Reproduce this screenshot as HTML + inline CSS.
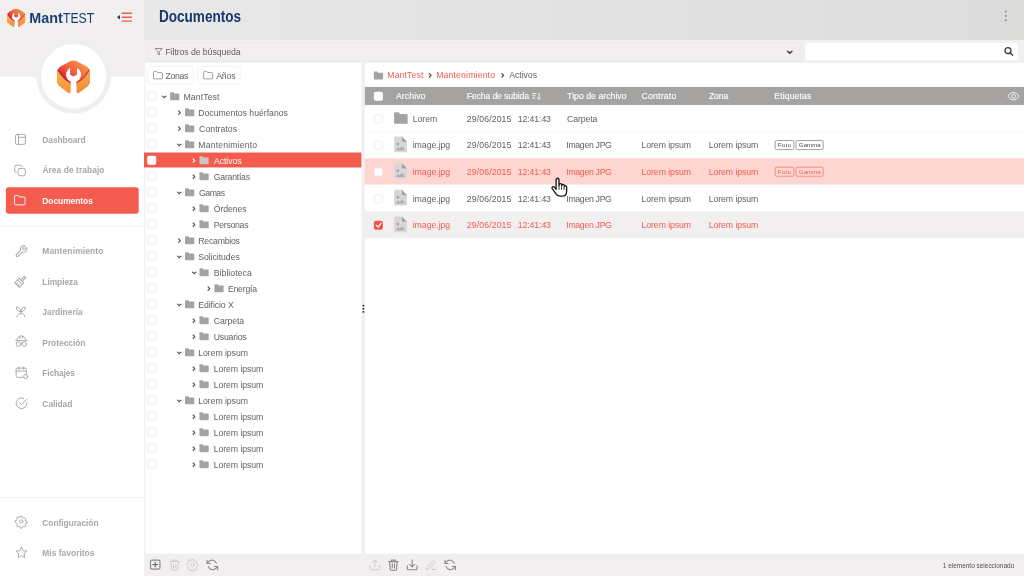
<!DOCTYPE html><html lang="es"><head><meta charset="utf-8"><title>MantTEST - Documentos</title><style>
*{box-sizing:border-box;margin:0;padding:0}
html,body{width:1024px;height:576px;overflow:hidden;background:#fff}
body{font-family:"Liberation Sans",sans-serif;font-size:16.312px;color:#63615f;position:relative}
#w{position:absolute;left:0;top:0;width:1920px;height:1080px;transform:scale(.5333333);transform-origin:0 0}
#o{position:absolute;left:0;top:0;width:1024px;height:576px;overflow:hidden;will-change:transform}
#z{position:absolute;left:0;top:0;width:1920px;height:1080px}
.a,.t,svg{position:absolute}
svg{display:block;overflow:visible}
.t{white-space:nowrap;line-height:1}
.cb{position:absolute;width:17.006px;height:17.006px;border:2.006px solid #f0eeee;border-radius:3.75px;background:#fff}
</style></head><body><div id="o"><div id="w"><div id="z">
<div class="a" style="left:0px;top:0px;width:270px;height:144px;background:#f1efef;"></div>
<div class="a" style="left:270px;top:0px;width:1650px;height:74.625px;background:linear-gradient(90deg,#e9e8e8 0%,#dddcdb 100%);"></div>
<div class="a" style="left:270px;top:74.625px;width:1650px;height:1005.375px;background:#f1efef;"></div>
<div class="a" style="left:270px;top:118.312px;width:3px;height:919.312px;background:#f5f3f3;"></div>
<div class="a" style="left:273px;top:118.312px;width:405px;height:919.312px;background:#fff;"></div>
<div class="a" style="left:684.375px;top:118.312px;width:1235.625px;height:919.312px;background:#fff;"></div>
<div class="a" style="left:67.875px;top:73.5px;width:139.875px;height:139.875px;border-radius:50%;background:#fff;border:9.938px solid #f0eeee"></div>
<svg style="left:12.75px;top:14.812px" width="34.69" height="36.38" viewBox="0 0 100 105" ><defs><linearGradient id="sa" gradientUnits="userSpaceOnUse" x1="75" y1="5" x2="22" y2="68"><stop offset="0" stop-color="#f89a48"/><stop offset="0.45" stop-color="#f2673c"/><stop offset="1" stop-color="#dc1a3a"/></linearGradient><linearGradient id="sb" gradientUnits="userSpaceOnUse" x1="30" y1="30" x2="50" y2="108"><stop offset="0" stop-color="#fbb648"/><stop offset="1" stop-color="#f5883c"/></linearGradient><clipPath id="sc"><path d="M36.9 7.3Q50.0 0.0 63.1 7.3L86.9 20.7Q100.0 28.0 100.0 43.0L100.0 62.0Q100.0 77.0 88.0 86.0L50.0 114.5L12.0 86.0Q0.0 77.0 0.0 62.0L0.0 43.0Q0.0 28.0 13.1 20.7Z"/></clipPath></defs>
<g clip-path="url(#sc)"><rect x="0" y="0" width="100" height="82" fill="url(#sa)"/>
<path d="M-2 24Q16 62 41.700 73M102 24Q84 62 58.300 73" fill="none" stroke="#8e1038" stroke-opacity=".55" stroke-width="5"/>
<path d="M-2 27Q16 62 41.700 73V96Q41.700 103 36 104L-2 84ZM102 27Q84 62 58.300 73V96Q58.300 103 64 104L102 84Z" fill="url(#sb)"/></g>
<path d="M39.600 26.300A23 23 0 1 0 60.400 26.300V47L50 52L39.600 47Z" fill="#fff"/><path d="M41.500 60h17v50h-17z" fill="#fff"/></svg>
<svg style="left:106.875px;top:110.812px" width="61.88" height="65.06" viewBox="0 0 100 105" ><defs><linearGradient id="ba" gradientUnits="userSpaceOnUse" x1="75" y1="5" x2="22" y2="68"><stop offset="0" stop-color="#f89a48"/><stop offset="0.45" stop-color="#f2673c"/><stop offset="1" stop-color="#dc1a3a"/></linearGradient><linearGradient id="bb" gradientUnits="userSpaceOnUse" x1="30" y1="30" x2="50" y2="108"><stop offset="0" stop-color="#fbb648"/><stop offset="1" stop-color="#f5883c"/></linearGradient><clipPath id="bc"><path d="M36.9 7.3Q50.0 0.0 63.1 7.3L86.9 20.7Q100.0 28.0 100.0 43.0L100.0 62.0Q100.0 77.0 88.0 86.0L50.0 114.5L12.0 86.0Q0.0 77.0 0.0 62.0L0.0 43.0Q0.0 28.0 13.1 20.7Z"/></clipPath></defs>
<g clip-path="url(#bc)"><rect x="0" y="0" width="100" height="82" fill="url(#ba)"/>
<path d="M-2 24Q16 62 41.700 73M102 24Q84 62 58.300 73" fill="none" stroke="#8e1038" stroke-opacity=".55" stroke-width="5"/>
<path d="M-2 27Q16 62 41.700 73V96Q41.700 103 36 104L-2 84ZM102 27Q84 62 58.300 73V96Q58.300 103 64 104L102 84Z" fill="url(#bb)"/></g>
<path d="M39.600 26.300A23 23 0 1 0 60.400 26.300V47L50 52L39.600 47Z" fill="#fff"/><path d="M41.500 60h17v50h-17z" fill="#fff"/></svg>
<div class="t x" style="left:54.75px;top:18.938px;font-size:29.062px;color:#1c3f73"><span style="display:inline-block;font-weight:700;transform:scaleX(.925);transform-origin:0 0;width:62.812px">Mant</span><span style="display:inline-block;transform:scaleX(.79);transform-origin:0 0">TEST</span></div>
<svg style="left:219.375px;top:22.5px" width="30.00" height="18.75" viewBox="0 0 16 10" ><path d="M0 5l3.2-2.2v4.4z" fill="#1c3f73"/><path d="M4.8 1h10.4M4.8 4.95h10.4M4.8 8.9h10.4" stroke="#f45b4f" stroke-width="1.4"/></svg>
<svg style="left:27.694px;top:251.381px" width="22.50" height="22.50" viewBox="0 0 12 12" fill="none" stroke="#a9a7a5" stroke-width="0.95" stroke-linecap="round" stroke-linejoin="round"><rect x="0.5" y="0.5" width="10" height="10" rx="1.6"/><path d="M3.6 0.5v10M3.6 3.4h6.9"/></svg>
<div class="t" style="left:79.331px;top:256.294px;font-size:15.75px;font-weight:700;color:#a9a7a5;letter-spacing:-0.128px;">Dashboard</div>
<svg style="left:26.756px;top:309.225px" width="21.66" height="21.66" viewBox="0 0 12 12" fill="none" stroke="#a9a7a5" stroke-width="0.99" stroke-linecap="round" stroke-linejoin="round"><rect x="3.8" y="3.800" width="7.600" height="7.600" rx="1.700"/><path d="M2 7.700h-.2A1.400 1.400 0 0 1 .4 6.300V1.900A1.400 1.400 0 0 1 1.800.5h4.400A1.400 1.400 0 0 1 7.600 1.900v.2"/></svg>
<div class="t" style="left:79.481px;top:310.669px;font-size:15.75px;font-weight:700;color:#a9a7a5;letter-spacing:0.124px;">Área de trabajo</div>
<div class="a" style="left:11.062px;top:351.094px;width:249.188px;height:50.062px;background:#f45b4f;border-radius:5.625px"></div>
<svg style="left:26.269px;top:365.456px" width="22.07" height="22.07" viewBox="0 0 12 12" fill="none" stroke="#fff" stroke-width="0.97" stroke-linecap="round" stroke-linejoin="round"><path d="M.6 2A1.200 1.200 0 0 1 1.800.8h2.600l1.400 1.600h4.400A1.200 1.200 0 0 1 11.400 3.600v5.600A1.200 1.200 0 0 1 10.200 10.400H1.800A1.200 1.200 0 0 1 .6 9.200z"/></svg>
<div class="t" style="left:79.331px;top:368.794px;font-size:15.75px;font-weight:700;color:#fff;letter-spacing:-0.077px;">Documentos</div>
<div class="a" style="left:0px;top:423.188px;width:270px;height:2.062px;background:#f3f1f1;"></div>
<svg style="left:29.081px;top:460.312px" width="22.11" height="22.11" viewBox="0 0 12 12" fill="none" stroke="#a9a7a5" stroke-width="0.97" stroke-linecap="round" stroke-linejoin="round"><path transform="translate(8.3,3.7) rotate(45)" d="M1.1-3.110A3.300 3.300 0 0 1 1.200 3.070L1.200 9A1.200 1.200 0 0 1-1.200 9L-1.200 3.070A3.300 3.300 0 0 1-1.100-3.110L-1.100-.3A1.100 1.100 0 0 0 1.100-.3Z"/></svg>
<div class="t" style="left:79.331px;top:462.544px;font-size:15.75px;font-weight:700;color:#a9a7a5;letter-spacing:0.292px;">Mantenimiento</div>
<svg style="left:24.281px;top:517.294px" width="25.24" height="25.24" viewBox="0 0 12 12" fill="none" stroke="#a9a7a5" stroke-width="0.85" stroke-linecap="round" stroke-linejoin="round"><g transform="translate(6.3,5.7) rotate(45)"><path d="M-.8-6.500h1.600v4.500h-1.600zM-3-2h6v2h-6zM-3 0v3.600h6V0M-1 1.800v1.800M1 1.800v1.800"/></g></svg>
<div class="t" style="left:79.331px;top:520.669px;font-size:15.75px;font-weight:700;color:#a9a7a5;letter-spacing:-0.103px;">Limpieza</div>
<svg style="left:29.494px;top:574.106px" width="22.18" height="22.18" viewBox="0 0 12 12" fill="none" stroke="#a9a7a5" stroke-width="0.96" stroke-linecap="round" stroke-linejoin="round"><path d="M5.500 5.500C5.500 3 4 1.200 1 1c0 3 1.500 4.500 4.500 4.500zM5.500 5.500C5.500 3 7 1.200 10 1c0 3-1.500 4.500-4.500 4.500zM5.500 5.500v2M1.500 10.800c0-2 1.800-3.300 4-3.300s4 1.300 4 3.300"/></svg>
<div class="t" style="left:79.463px;top:576.919px;font-size:15.75px;font-weight:700;color:#a9a7a5;letter-spacing:0.043px;">Jardinería</div>
<svg style="left:28.088px;top:627.056px" width="26.06" height="26.06" viewBox="0 0 12 12" fill="none" stroke="#a9a7a5" stroke-width="0.82" stroke-linecap="round" stroke-linejoin="round"><path d="M1.600 5.200a3.900 3.900 0 0 1 7.800 0M.6 5.400h9.800M4.300 1.600v2M6.700 1.600v2"/><circle cx="3" cy="8.400" r="2"/><circle cx="8" cy="8.400" r="2"/><path d="M5 8h1"/></svg>
<div class="t" style="left:79.331px;top:635.044px;font-size:15.75px;font-weight:700;color:#a9a7a5;letter-spacing:-0.056px;">Protección</div>
<svg style="left:28.969px;top:686.531px" width="23.62" height="23.62" viewBox="0 0 12 12" fill="none" stroke="#a9a7a5" stroke-width="0.91" stroke-linecap="round" stroke-linejoin="round"><path d="M7.400 10.400H1.800A1.200 1.200 0 0 1 .6 9.200V2.800a1.200 1.200 0 0 1 1.200-1.200h7.400a1.200 1.200 0 0 1 1.200 1.200v4.600M.6 4.400h9.800M3.200.4v2.400M7.800.4v2.400"/><circle cx="9.700" cy="9.700" r="2" fill="#fff"/></svg>
<div class="t" style="left:79.331px;top:692.231px;font-size:15.75px;font-weight:700;color:#a9a7a5;letter-spacing:-0.283px;">Fichajes</div>
<svg style="left:28.613px;top:744.806px" width="24.02" height="24.02" viewBox="0 0 12 12" fill="none" stroke="#a9a7a5" stroke-width="0.89" stroke-linecap="round" stroke-linejoin="round"><path d="M10.600 5v.5a5 5 0 1 1-3-4.600M11 1.400L5.600 6.800 4 5.200"/></svg>
<div class="t" style="left:79.444px;top:751.294px;font-size:15.75px;font-weight:700;color:#a9a7a5;letter-spacing:-0.107px;">Calidad</div>
<div class="a" style="left:0px;top:932.438px;width:270px;height:2.062px;background:#f3f1f1;"></div>
<svg style="left:29.156px;top:967.406px" width="22.50" height="22.50" viewBox="0 0 12 12" fill="none" stroke="#a9a7a5" stroke-width="0.95" stroke-linecap="round" stroke-linejoin="round"><circle cx="5.800" cy="5.800" r="1.700"/><path d="M5 .6h1.600l.4 1.500 1 .5 1.400-.8 1.100 1.100-.8 1.400.5 1 1.500.4v1.600l-1.500.4-.5 1 .8 1.400-1.100 1.100-1.400-.8-1 .5-.4 1.500H5l-.4-1.500-1-.5-1.400.8-1.100-1.100.8-1.400-.5-1L-.1 6.600V5l1.500-.4.5-1-.8-1.400 1.100-1.100 1.400.8 1-.5z"/></svg>
<div class="t" style="left:79.444px;top:972.544px;font-size:15.75px;font-weight:700;color:#a9a7a5;letter-spacing:-0.12px;">Configuración</div>
<svg style="left:28.875px;top:1024.931px" width="23.17" height="23.17" viewBox="0 0 12 12" fill="none" stroke="#a9a7a5" stroke-width="0.92" stroke-linecap="round" stroke-linejoin="round"><path d="M5.800.6l1.600 3.300 3.600.5-2.600 2.500.6 3.600-3.200-1.700-3.200 1.700.6-3.600L.6 4.400l3.600-.5z"/></svg>
<div class="t" style="left:79.331px;top:1028.794px;font-size:15.75px;font-weight:700;color:#a9a7a5;letter-spacing:0.052px;">Mis favoritos</div>
<div class="t x" style="left:298.125px;top:16.875px;font-size:29.25px;font-weight:700;color:#17376b"><span style="display:inline-block;transform:scaleX(.87);transform-origin:0 0">Documentos</span></div>
<svg style="left:1883.438px;top:18.75px" width="5.62" height="22.50" viewBox="0 0 3 12" fill="#a3a19f"><circle cx="1.5" cy="1.5" r="1.150"/><circle cx="1.5" cy="5.800" r="1.150"/><circle cx="1.5" cy="10.100" r="1.150"/></svg>
<div class="a" style="left:275.625px;top:79.688px;width:1225.312px;height:34.125px;background:#f1efef;border:1.875px solid #e6e4e4;border-radius:4.688px"></div>
<svg style="left:290.25px;top:89.812px" width="15.00" height="13.88" viewBox="0 0 8 7.4" fill="none" stroke="#7b7977" stroke-width="0.8" stroke-linejoin="round"><path d="M.5.5h7L4.700 3.700v3.100L3.300 6V3.700z"/></svg>
<div class="t" style="left:310.125px;top:88.931px;letter-spacing:-0.12px;">Filtros de búsqueda</div>
<svg style="left:1475.25px;top:93.562px" width="11.62" height="7.88" viewBox="0 0 6.2 4.2" ><path d="M0.9 1L3.1 3.200L5.300 1" fill="none" stroke="#3a3836" stroke-width="1.4" stroke-linecap="round" stroke-linejoin="round"/></svg>
<div class="a" style="left:1510.312px;top:80.25px;width:399px;height:32.25px;background:#fff;border-radius:4.688px"></div>
<svg style="left:1882.5px;top:88.125px" width="16.88" height="16.88" viewBox="0 0 9 9" fill="none" stroke="#3a3836" stroke-width="1.3" stroke-linecap="round"><circle cx="3.700" cy="3.700" r="3"/><path d="M6 6l2.400 2.400"/></svg>
<div class="a" style="left:276.375px;top:124.125px;width:87px;height:33.75px;background:#fff;border:1.875px solid #ebe9e9;border-radius:5.625px"></div>
<svg style="left:287.062px;top:132.938px" width="18.56" height="15.75" viewBox="0 0 9.9 8.4" fill="none" stroke="#8a8886" stroke-width="0.8" stroke-linejoin="round"><path d="M.45 1.300A.85.85 0 0 1 1.300.45h2.200l1.100 1.200h4a.85.85 0 0 1 .85.85v4.600a.85.85 0 0 1-.85.85H1.300a.85.85 0 0 1-.85-.85z"/></svg>
<div class="t" style="left:310.125px;top:133.931px;letter-spacing:-0.549px;">Zonas</div>
<div class="a" style="left:370.125px;top:124.125px;width:80.625px;height:33.75px;background:#fff;border:1.875px solid #ebe9e9;border-radius:5.625px"></div>
<svg style="left:380.812px;top:132.938px" width="18.56" height="15.75" viewBox="0 0 9.9 8.4" fill="none" stroke="#8a8886" stroke-width="0.8" stroke-linejoin="round"><path d="M.45 1.300A.85.85 0 0 1 1.300.45h2.200l1.100 1.200h4a.85.85 0 0 1 .85.85v4.600a.85.85 0 0 1-.85.85H1.300a.85.85 0 0 1-.85-.85z"/></svg>
<div class="t" style="left:405.469px;top:133.931px;letter-spacing:-0.336px;">Años</div>
<div class="cb" style="left:275.906px;top:171.6px;"></div>
<svg style="left:304.125px;top:178.5px" width="8.25" height="5.25" viewBox="0 0 4.4 2.8" ><path d="M0.5 0.55L2.2 2.25L3.9 0.55" fill="none" stroke="#4a4846" stroke-width="1.1" stroke-linecap="round" stroke-linejoin="round"/></svg>
<svg style="left:318.938px;top:172.688px" width="17.25" height="14.81" viewBox="0 0 92 79" ><path d="M4 0h29l7 12h48a4 4 0 0 1 4 4v59a4 4 0 0 1-4 4H4a4 4 0 0 1-4-4V4a4 4 0 0 1 4-4z" fill="#a5a3a1"/></svg>
<div class="t" style="left:344.062px;top:173.306px;letter-spacing:0.195px;">MantTest</div>
<div class="cb" style="left:275.906px;top:201.6px;"></div>
<svg style="left:333.562px;top:206.906px" width="5.25" height="8.44" viewBox="0 0 2.8 4.5" ><path d="M0.55 0.5L2.25 2.25L0.55 4" fill="none" stroke="#4a4846" stroke-width="1.1" stroke-linecap="round" stroke-linejoin="round"/></svg>
<svg style="left:346.688px;top:202.688px" width="17.25" height="14.81" viewBox="0 0 92 79" ><path d="M4 0h29l7 12h48a4 4 0 0 1 4 4v59a4 4 0 0 1-4 4H4a4 4 0 0 1-4-4V4a4 4 0 0 1 4-4z" fill="#a5a3a1"/></svg>
<div class="t" style="left:371.812px;top:203.306px;letter-spacing:-0.026px;">Documentos huérfanos</div>
<div class="cb" style="left:275.906px;top:231.6px;"></div>
<svg style="left:333.562px;top:236.906px" width="5.25" height="8.44" viewBox="0 0 2.8 4.5" ><path d="M0.55 0.5L2.25 2.25L0.55 4" fill="none" stroke="#4a4846" stroke-width="1.1" stroke-linecap="round" stroke-linejoin="round"/></svg>
<svg style="left:346.688px;top:232.688px" width="17.25" height="14.81" viewBox="0 0 92 79" ><path d="M4 0h29l7 12h48a4 4 0 0 1 4 4v59a4 4 0 0 1-4 4H4a4 4 0 0 1-4-4V4a4 4 0 0 1 4-4z" fill="#a5a3a1"/></svg>
<div class="t" style="left:373.256px;top:233.306px;letter-spacing:0.077px;">Contratos</div>
<div class="cb" style="left:275.906px;top:261.6px;"></div>
<svg style="left:331.875px;top:268.5px" width="8.25" height="5.25" viewBox="0 0 4.4 2.8" ><path d="M0.5 0.55L2.2 2.25L3.9 0.55" fill="none" stroke="#4a4846" stroke-width="1.1" stroke-linecap="round" stroke-linejoin="round"/></svg>
<svg style="left:346.688px;top:262.688px" width="17.25" height="14.81" viewBox="0 0 92 79" ><path d="M4 0h29l7 12h48a4 4 0 0 1 4 4v59a4 4 0 0 1-4 4H4a4 4 0 0 1-4-4V4a4 4 0 0 1 4-4z" fill="#a5a3a1"/></svg>
<div class="t" style="left:371.812px;top:263.306px;letter-spacing:0.281px;">Mantenimiento</div>
<div class="a" style="left:270px;top:286.125px;width:408px;height:27.938px;background:#f45b4f;"></div>
<div class="cb" style="left:275.906px;top:291.6px;border-color:#fff"></div>
<svg style="left:361.312px;top:296.906px" width="5.25" height="8.44" viewBox="0 0 2.8 4.5" ><path d="M0.55 0.5L2.25 2.25L0.55 4" fill="none" stroke="#fff" stroke-width="1.1" stroke-linecap="round" stroke-linejoin="round"/></svg>
<svg style="left:374.438px;top:292.688px" width="17.25" height="14.81" viewBox="0 0 92 79" ><path d="M4 0h29l7 12h48a4 4 0 0 1 4 4v59a4 4 0 0 1-4 4H4a4 4 0 0 1-4-4V4a4 4 0 0 1 4-4z" fill="#c9c7c6"/></svg>
<div class="t" style="left:401.081px;top:293.306px;color:#fff;letter-spacing:-0.075px;">Activos</div>
<div class="cb" style="left:275.906px;top:321.6px;"></div>
<svg style="left:361.312px;top:326.906px" width="5.25" height="8.44" viewBox="0 0 2.8 4.5" ><path d="M0.55 0.5L2.25 2.25L0.55 4" fill="none" stroke="#4a4846" stroke-width="1.1" stroke-linecap="round" stroke-linejoin="round"/></svg>
<svg style="left:374.438px;top:322.688px" width="17.25" height="14.81" viewBox="0 0 92 79" ><path d="M4 0h29l7 12h48a4 4 0 0 1 4 4v59a4 4 0 0 1-4 4H4a4 4 0 0 1-4-4V4a4 4 0 0 1 4-4z" fill="#a5a3a1"/></svg>
<div class="t" style="left:400.894px;top:323.306px;letter-spacing:-0.448px;">Garantías</div>
<div class="cb" style="left:275.906px;top:351.6px;"></div>
<svg style="left:331.875px;top:358.5px" width="8.25" height="5.25" viewBox="0 0 4.4 2.8" ><path d="M0.5 0.55L2.2 2.25L3.9 0.55" fill="none" stroke="#4a4846" stroke-width="1.1" stroke-linecap="round" stroke-linejoin="round"/></svg>
<svg style="left:346.688px;top:352.688px" width="17.25" height="14.81" viewBox="0 0 92 79" ><path d="M4 0h29l7 12h48a4 4 0 0 1 4 4v59a4 4 0 0 1-4 4H4a4 4 0 0 1-4-4V4a4 4 0 0 1 4-4z" fill="#a5a3a1"/></svg>
<div class="t" style="left:373.238px;top:353.306px;letter-spacing:-0.953px;">Gamas</div>
<div class="cb" style="left:275.906px;top:381.6px;"></div>
<svg style="left:361.312px;top:386.906px" width="5.25" height="8.44" viewBox="0 0 2.8 4.5" ><path d="M0.55 0.5L2.25 2.25L0.55 4" fill="none" stroke="#4a4846" stroke-width="1.1" stroke-linecap="round" stroke-linejoin="round"/></svg>
<svg style="left:374.438px;top:382.688px" width="17.25" height="14.81" viewBox="0 0 92 79" ><path d="M4 0h29l7 12h48a4 4 0 0 1 4 4v59a4 4 0 0 1-4 4H4a4 4 0 0 1-4-4V4a4 4 0 0 1 4-4z" fill="#a5a3a1"/></svg>
<div class="t" style="left:400.95px;top:383.306px;letter-spacing:-0.142px;">Órdenes</div>
<div class="cb" style="left:275.906px;top:411.6px;"></div>
<svg style="left:361.312px;top:416.906px" width="5.25" height="8.44" viewBox="0 0 2.8 4.5" ><path d="M0.55 0.5L2.25 2.25L0.55 4" fill="none" stroke="#4a4846" stroke-width="1.1" stroke-linecap="round" stroke-linejoin="round"/></svg>
<svg style="left:374.438px;top:412.688px" width="17.25" height="14.81" viewBox="0 0 92 79" ><path d="M4 0h29l7 12h48a4 4 0 0 1 4 4v59a4 4 0 0 1-4 4H4a4 4 0 0 1-4-4V4a4 4 0 0 1 4-4z" fill="#a5a3a1"/></svg>
<div class="t" style="left:400.706px;top:413.306px;letter-spacing:-0.519px;">Personas</div>
<div class="cb" style="left:275.906px;top:441.6px;"></div>
<svg style="left:333.562px;top:446.906px" width="5.25" height="8.44" viewBox="0 0 2.8 4.5" ><path d="M0.55 0.5L2.25 2.25L0.55 4" fill="none" stroke="#4a4846" stroke-width="1.1" stroke-linecap="round" stroke-linejoin="round"/></svg>
<svg style="left:346.688px;top:442.688px" width="17.25" height="14.81" viewBox="0 0 92 79" ><path d="M4 0h29l7 12h48a4 4 0 0 1 4 4v59a4 4 0 0 1-4 4H4a4 4 0 0 1-4-4V4a4 4 0 0 1 4-4z" fill="#a5a3a1"/></svg>
<div class="t" style="left:371.812px;top:443.306px;letter-spacing:-0.429px;">Recambios</div>
<div class="cb" style="left:275.906px;top:471.6px;"></div>
<svg style="left:331.875px;top:478.5px" width="8.25" height="5.25" viewBox="0 0 4.4 2.8" ><path d="M0.5 0.55L2.2 2.25L3.9 0.55" fill="none" stroke="#4a4846" stroke-width="1.1" stroke-linecap="round" stroke-linejoin="round"/></svg>
<svg style="left:346.688px;top:472.688px" width="17.25" height="14.81" viewBox="0 0 92 79" ><path d="M4 0h29l7 12h48a4 4 0 0 1 4 4v59a4 4 0 0 1-4 4H4a4 4 0 0 1-4-4V4a4 4 0 0 1 4-4z" fill="#a5a3a1"/></svg>
<div class="t" style="left:371.812px;top:473.306px;letter-spacing:-0.107px;">Solicitudes</div>
<div class="cb" style="left:275.906px;top:501.6px;"></div>
<svg style="left:359.625px;top:508.5px" width="8.25" height="5.25" viewBox="0 0 4.4 2.8" ><path d="M0.5 0.55L2.2 2.25L3.9 0.55" fill="none" stroke="#4a4846" stroke-width="1.1" stroke-linecap="round" stroke-linejoin="round"/></svg>
<svg style="left:374.438px;top:502.688px" width="17.25" height="14.81" viewBox="0 0 92 79" ><path d="M4 0h29l7 12h48a4 4 0 0 1 4 4v59a4 4 0 0 1-4 4H4a4 4 0 0 1-4-4V4a4 4 0 0 1 4-4z" fill="#a5a3a1"/></svg>
<div class="t" style="left:400.706px;top:503.306px;letter-spacing:0.081px;">Biblioteca</div>
<div class="cb" style="left:275.906px;top:531.6px;"></div>
<svg style="left:389.062px;top:536.906px" width="5.25" height="8.44" viewBox="0 0 2.8 4.5" ><path d="M0.55 0.5L2.25 2.25L0.55 4" fill="none" stroke="#4a4846" stroke-width="1.1" stroke-linecap="round" stroke-linejoin="round"/></svg>
<svg style="left:402.188px;top:532.688px" width="17.25" height="14.81" viewBox="0 0 92 79" ><path d="M4 0h29l7 12h48a4 4 0 0 1 4 4v59a4 4 0 0 1-4 4H4a4 4 0 0 1-4-4V4a4 4 0 0 1 4-4z" fill="#a5a3a1"/></svg>
<div class="t" style="left:427.312px;top:533.306px;letter-spacing:-0.403px;">Energía</div>
<div class="cb" style="left:275.906px;top:561.6px;"></div>
<svg style="left:331.875px;top:568.5px" width="8.25" height="5.25" viewBox="0 0 4.4 2.8" ><path d="M0.5 0.55L2.2 2.25L3.9 0.55" fill="none" stroke="#4a4846" stroke-width="1.1" stroke-linecap="round" stroke-linejoin="round"/></svg>
<svg style="left:346.688px;top:562.688px" width="17.25" height="14.81" viewBox="0 0 92 79" ><path d="M4 0h29l7 12h48a4 4 0 0 1 4 4v59a4 4 0 0 1-4 4H4a4 4 0 0 1-4-4V4a4 4 0 0 1 4-4z" fill="#a5a3a1"/></svg>
<div class="t" style="left:371.812px;top:563.306px;letter-spacing:-0.172px;">Edificio X</div>
<div class="cb" style="left:275.906px;top:591.6px;"></div>
<svg style="left:361.312px;top:596.906px" width="5.25" height="8.44" viewBox="0 0 2.8 4.5" ><path d="M0.55 0.5L2.25 2.25L0.55 4" fill="none" stroke="#4a4846" stroke-width="1.1" stroke-linecap="round" stroke-linejoin="round"/></svg>
<svg style="left:374.438px;top:592.688px" width="17.25" height="14.81" viewBox="0 0 92 79" ><path d="M4 0h29l7 12h48a4 4 0 0 1 4 4v59a4 4 0 0 1-4 4H4a4 4 0 0 1-4-4V4a4 4 0 0 1 4-4z" fill="#a5a3a1"/></svg>
<div class="t" style="left:400.931px;top:593.306px;letter-spacing:-0.178px;">Carpeta</div>
<div class="cb" style="left:275.906px;top:621.6px;"></div>
<svg style="left:361.312px;top:626.906px" width="5.25" height="8.44" viewBox="0 0 2.8 4.5" ><path d="M0.55 0.5L2.25 2.25L0.55 4" fill="none" stroke="#4a4846" stroke-width="1.1" stroke-linecap="round" stroke-linejoin="round"/></svg>
<svg style="left:374.438px;top:622.688px" width="17.25" height="14.81" viewBox="0 0 92 79" ><path d="M4 0h29l7 12h48a4 4 0 0 1 4 4v59a4 4 0 0 1-4 4H4a4 4 0 0 1-4-4V4a4 4 0 0 1 4-4z" fill="#a5a3a1"/></svg>
<div class="t" style="left:400.763px;top:623.306px;letter-spacing:-0.36px;">Usuarios</div>
<div class="cb" style="left:275.906px;top:651.6px;"></div>
<svg style="left:331.875px;top:658.5px" width="8.25" height="5.25" viewBox="0 0 4.4 2.8" ><path d="M0.5 0.55L2.2 2.25L3.9 0.55" fill="none" stroke="#4a4846" stroke-width="1.1" stroke-linecap="round" stroke-linejoin="round"/></svg>
<svg style="left:346.688px;top:652.688px" width="17.25" height="14.81" viewBox="0 0 92 79" ><path d="M4 0h29l7 12h48a4 4 0 0 1 4 4v59a4 4 0 0 1-4 4H4a4 4 0 0 1-4-4V4a4 4 0 0 1 4-4z" fill="#a5a3a1"/></svg>
<div class="t" style="left:371.812px;top:653.306px;letter-spacing:-0.118px;">Lorem ipsum</div>
<div class="cb" style="left:275.906px;top:681.6px;"></div>
<svg style="left:361.312px;top:686.906px" width="5.25" height="8.44" viewBox="0 0 2.8 4.5" ><path d="M0.55 0.5L2.25 2.25L0.55 4" fill="none" stroke="#4a4846" stroke-width="1.1" stroke-linecap="round" stroke-linejoin="round"/></svg>
<svg style="left:374.438px;top:682.688px" width="17.25" height="14.81" viewBox="0 0 92 79" ><path d="M4 0h29l7 12h48a4 4 0 0 1 4 4v59a4 4 0 0 1-4 4H4a4 4 0 0 1-4-4V4a4 4 0 0 1 4-4z" fill="#a5a3a1"/></svg>
<div class="t" style="left:400.706px;top:683.306px;letter-spacing:-0.118px;">Lorem ipsum</div>
<div class="cb" style="left:275.906px;top:711.6px;"></div>
<svg style="left:361.312px;top:716.906px" width="5.25" height="8.44" viewBox="0 0 2.8 4.5" ><path d="M0.55 0.5L2.25 2.25L0.55 4" fill="none" stroke="#4a4846" stroke-width="1.1" stroke-linecap="round" stroke-linejoin="round"/></svg>
<svg style="left:374.438px;top:712.688px" width="17.25" height="14.81" viewBox="0 0 92 79" ><path d="M4 0h29l7 12h48a4 4 0 0 1 4 4v59a4 4 0 0 1-4 4H4a4 4 0 0 1-4-4V4a4 4 0 0 1 4-4z" fill="#a5a3a1"/></svg>
<div class="t" style="left:400.706px;top:713.306px;letter-spacing:-0.118px;">Lorem ipsum</div>
<div class="cb" style="left:275.906px;top:741.6px;"></div>
<svg style="left:331.875px;top:748.5px" width="8.25" height="5.25" viewBox="0 0 4.4 2.8" ><path d="M0.5 0.55L2.2 2.25L3.9 0.55" fill="none" stroke="#4a4846" stroke-width="1.1" stroke-linecap="round" stroke-linejoin="round"/></svg>
<svg style="left:346.688px;top:742.688px" width="17.25" height="14.81" viewBox="0 0 92 79" ><path d="M4 0h29l7 12h48a4 4 0 0 1 4 4v59a4 4 0 0 1-4 4H4a4 4 0 0 1-4-4V4a4 4 0 0 1 4-4z" fill="#a5a3a1"/></svg>
<div class="t" style="left:371.812px;top:743.306px;letter-spacing:-0.118px;">Lorem ipsum</div>
<div class="cb" style="left:275.906px;top:771.6px;"></div>
<svg style="left:361.312px;top:776.906px" width="5.25" height="8.44" viewBox="0 0 2.8 4.5" ><path d="M0.55 0.5L2.25 2.25L0.55 4" fill="none" stroke="#4a4846" stroke-width="1.1" stroke-linecap="round" stroke-linejoin="round"/></svg>
<svg style="left:374.438px;top:772.688px" width="17.25" height="14.81" viewBox="0 0 92 79" ><path d="M4 0h29l7 12h48a4 4 0 0 1 4 4v59a4 4 0 0 1-4 4H4a4 4 0 0 1-4-4V4a4 4 0 0 1 4-4z" fill="#a5a3a1"/></svg>
<div class="t" style="left:400.706px;top:773.306px;letter-spacing:-0.118px;">Lorem ipsum</div>
<div class="cb" style="left:275.906px;top:801.6px;"></div>
<svg style="left:361.312px;top:806.906px" width="5.25" height="8.44" viewBox="0 0 2.8 4.5" ><path d="M0.55 0.5L2.25 2.25L0.55 4" fill="none" stroke="#4a4846" stroke-width="1.1" stroke-linecap="round" stroke-linejoin="round"/></svg>
<svg style="left:374.438px;top:802.688px" width="17.25" height="14.81" viewBox="0 0 92 79" ><path d="M4 0h29l7 12h48a4 4 0 0 1 4 4v59a4 4 0 0 1-4 4H4a4 4 0 0 1-4-4V4a4 4 0 0 1 4-4z" fill="#a5a3a1"/></svg>
<div class="t" style="left:400.706px;top:803.306px;letter-spacing:-0.118px;">Lorem ipsum</div>
<div class="cb" style="left:275.906px;top:831.6px;"></div>
<svg style="left:361.312px;top:836.906px" width="5.25" height="8.44" viewBox="0 0 2.8 4.5" ><path d="M0.55 0.5L2.25 2.25L0.55 4" fill="none" stroke="#4a4846" stroke-width="1.1" stroke-linecap="round" stroke-linejoin="round"/></svg>
<svg style="left:374.438px;top:832.688px" width="17.25" height="14.81" viewBox="0 0 92 79" ><path d="M4 0h29l7 12h48a4 4 0 0 1 4 4v59a4 4 0 0 1-4 4H4a4 4 0 0 1-4-4V4a4 4 0 0 1 4-4z" fill="#a5a3a1"/></svg>
<div class="t" style="left:400.706px;top:833.306px;letter-spacing:-0.118px;">Lorem ipsum</div>
<div class="cb" style="left:275.906px;top:861.6px;"></div>
<svg style="left:361.312px;top:866.906px" width="5.25" height="8.44" viewBox="0 0 2.8 4.5" ><path d="M0.55 0.5L2.25 2.25L0.55 4" fill="none" stroke="#4a4846" stroke-width="1.1" stroke-linecap="round" stroke-linejoin="round"/></svg>
<svg style="left:374.438px;top:862.688px" width="17.25" height="14.81" viewBox="0 0 92 79" ><path d="M4 0h29l7 12h48a4 4 0 0 1 4 4v59a4 4 0 0 1-4 4H4a4 4 0 0 1-4-4V4a4 4 0 0 1 4-4z" fill="#a5a3a1"/></svg>
<div class="t" style="left:400.706px;top:863.306px;letter-spacing:-0.118px;">Lorem ipsum</div>
<div class="a" style="left:678px;top:118.312px;width:6.375px;height:919.312px;background:#f1efef;"></div>
<svg style="left:678.75px;top:571.125px" width="5.62" height="16.88" viewBox="0 0 3 9" fill="#3a3836"><rect x=".4" y=".3" width="1.700" height="1.700"/><rect x=".4" y="3.400" width="1.700" height="1.700"/><rect x=".4" y="6.500" width="1.700" height="1.700"/></svg>
<svg style="left:701.25px;top:133.5px" width="17.25" height="15.00" viewBox="0 0 92 79" ><path d="M4 0h29l7 12h48a4 4 0 0 1 4 4v59a4 4 0 0 1-4 4H4a4 4 0 0 1-4-4V4a4 4 0 0 1 4-4z" fill="#a5a3a1"/></svg>
<div class="t" style="left:726.188px;top:132.056px;color:#f45b4f;letter-spacing:0.195px;">MantTest</div>
<svg style="left:803.812px;top:136.969px" width="5.25" height="8.44" viewBox="0 0 2.8 4.5" ><path d="M0.55 0.5L2.25 2.25L0.55 4" fill="none" stroke="#4a4846" stroke-width="1.25" stroke-linecap="round" stroke-linejoin="round"/></svg>
<div class="t" style="left:817.875px;top:132.056px;color:#f45b4f;letter-spacing:0.281px;">Mantenimiento</div>
<svg style="left:940.125px;top:136.969px" width="5.25" height="8.44" viewBox="0 0 2.8 4.5" ><path d="M0.55 0.5L2.25 2.25L0.55 4" fill="none" stroke="#4a4846" stroke-width="1.25" stroke-linecap="round" stroke-linejoin="round"/></svg>
<div class="t" style="left:954.769px;top:132.056px;letter-spacing:-0.075px;">Activos</div>
<div class="a" style="left:684.375px;top:163.312px;width:1235.625px;height:33.375px;background:#a5a3a1;"></div>
<div class="a" style="left:701.25px;top:172.031px;width:16.875px;height:16.875px;background:#fff;border-radius:3.75px"></div>
<div class="t" style="left:742.481px;top:171.431px;color:#fff;letter-spacing:0.141px;-webkit-text-stroke:0.225px #fff">Archivo</div>
<div class="t" style="left:875.062px;top:171.431px;color:#fff;letter-spacing:-0.261px;-webkit-text-stroke:0.225px #fff">Fecha de subida</div>
<div class="t" style="left:1063.369px;top:171.431px;color:#fff;letter-spacing:0.043px;-webkit-text-stroke:0.225px #fff">Tipo de archivo</div>
<div class="t" style="left:1202.812px;top:171.431px;color:#fff;letter-spacing:0.396px;-webkit-text-stroke:0.225px #fff">Contrato</div>
<div class="t" style="left:1329.206px;top:171.431px;color:#fff;letter-spacing:-0.231px;-webkit-text-stroke:0.225px #fff">Zona</div>
<div class="t" style="left:1451.812px;top:171.431px;color:#fff;letter-spacing:0.184px;-webkit-text-stroke:0.225px #fff">Etiquetas</div>
<svg style="left:998.062px;top:174.188px" width="16.88" height="14.06" viewBox="0 0 9 7.500" fill="none" stroke="#fff" stroke-width="0.9"><path d="M0 .8h4.200M0 3h3.400M0 5.200h2.600M6.700 0v6.500M5 4.900l1.700 1.700 1.700-1.700"/></svg>
<svg style="left:1889.25px;top:171.75px" width="22.50" height="16.88" viewBox="0 0 12 9" fill="none" stroke="#fff" stroke-width="0.9"><path d="M.6 4.500C2 2 3.800.8 6 .8s4 1.200 5.400 3.700C10 7 8.200 8.200 6 8.200S2 7 .6 4.500z"/><circle cx="6" cy="4.500" r="1.900"/></svg>
<div class="a" style="left:684.375px;top:197.006px;width:1235.625px;height:48.75px;background:#fff;"></div>
<div class="a" style="left:684.375px;top:245.756px;width:1235.625px;height:1.256px;background:#efeded;"></div>
<div class="cb" style="left:701.156px;top:213.506px"></div>
<svg style="left:738.75px;top:209.812px" width="25.31" height="22.31" viewBox="0 0 92 79" ><path d="M4 0h29l7 12h48a4 4 0 0 1 4 4v59a4 4 0 0 1-4 4H4a4 4 0 0 1-4-4V4a4 4 0 0 1 4-4z" fill="#a5a3a1"/></svg>
<div class="t" style="left:773.812px;top:214.556px;">Lorem</div>
<div class="t" style="left:875.231px;top:214.556px;letter-spacing:0.231px;">29/06/2015</div>
<div class="t" style="left:970.875px;top:214.556px;letter-spacing:-0.184px;">12:41:43</div>
<div class="t" style="left:1063.256px;top:214.556px;letter-spacing:-0.178px;">Carpeta</div>
<div class="a" style="left:684.375px;top:247.013px;width:1235.625px;height:48.75px;background:#fff;"></div>
<div class="a" style="left:684.375px;top:295.744px;width:1235.625px;height:1.256px;background:#efeded;"></div>
<div class="cb" style="left:701.156px;top:263.512px"></div>
<svg style="left:739.219px;top:256.163px" width="24.19" height="29.25" viewBox="0 0 129 156" ><path d="M12 0h66l51 53v91a12 12 0 0 1-12 12H12a12 12 0 0 1-12-12V12a12 12 0 0 1 12-12z" fill="#d9d7d6"/><path d="M78 0l51 53H86a8 8 0 0 1-8-8z" fill="#a5a3a1"/><circle cx="37" cy="75" r="15" fill="#aeacaa"/><path d="M18 137l22-32 16 18 22-29 32 43z" fill="#b0aeac"/></svg>
<div class="t" style="left:773.812px;top:263.306px;letter-spacing:-0.043px;">image.jpg</div>
<div class="t" style="left:875.231px;top:263.306px;letter-spacing:0.231px;">29/06/2015</div>
<div class="t" style="left:970.875px;top:263.306px;letter-spacing:-0.184px;">12:41:43</div>
<div class="t" style="left:1061.812px;top:263.306px;letter-spacing:-0.566px;">Imagen JPG</div>
<div class="t" style="left:1202.812px;top:263.306px;letter-spacing:-0.118px;">Lorem ipsum</div>
<div class="t" style="left:1328.831px;top:263.306px;letter-spacing:-0.118px;">Lorem ipsum</div>
<div class="a" style="left:1453.125px;top:262.819px;width:35.625px;height:18.375px;background:#fff;border:1.312px solid #4f4d4b;border-radius:3px"></div>
<div class="t" style="left:1458.206px;top:265.669px;font-size:11.438px;color:#4a4846;letter-spacing:0.547px;">Foto</div>
<div class="a" style="left:1492.312px;top:262.819px;width:51.562px;height:18.375px;background:#fff;border:1.312px solid #4f4d4b;border-radius:3px"></div>
<div class="t" style="left:1497.9px;top:265.669px;font-size:11.438px;color:#4a4846;letter-spacing:0.079px;">Gamma</div>
<div class="a" style="left:684.375px;top:297px;width:1235.625px;height:48.75px;background:#fdd6d2;"></div>
<div class="a" style="left:684.375px;top:345.75px;width:1235.625px;height:1.256px;background:#f6eeee;"></div>
<div class="cb" style="left:701.156px;top:313.519px"></div>
<svg style="left:739.219px;top:306.169px" width="24.19" height="29.25" viewBox="0 0 129 156" ><path d="M12 0h66l51 53v91a12 12 0 0 1-12 12H12a12 12 0 0 1-12-12V12a12 12 0 0 1 12-12z" fill="#d9d7d6"/><path d="M78 0l51 53H86a8 8 0 0 1-8-8z" fill="#a5a3a1"/><circle cx="37" cy="75" r="15" fill="#aeacaa"/><path d="M18 137l22-32 16 18 22-29 32 43z" fill="#b0aeac"/></svg>
<div class="t" style="left:773.812px;top:313.931px;color:#f45b4f;letter-spacing:-0.043px;">image.jpg</div>
<div class="t" style="left:875.231px;top:313.931px;color:#f45b4f;letter-spacing:0.231px;">29/06/2015</div>
<div class="t" style="left:970.875px;top:313.931px;color:#f45b4f;letter-spacing:-0.184px;">12:41:43</div>
<div class="t" style="left:1061.812px;top:313.931px;color:#f45b4f;letter-spacing:-0.566px;">Imagen JPG</div>
<div class="t" style="left:1202.812px;top:313.931px;color:#f45b4f;letter-spacing:-0.118px;">Lorem ipsum</div>
<div class="t" style="left:1328.831px;top:313.931px;color:#f45b4f;letter-spacing:-0.118px;">Lorem ipsum</div>
<div class="a" style="left:1453.125px;top:312.825px;width:35.625px;height:18.375px;background:transparent;border:1.312px solid #f24a3d;border-radius:3px"></div>
<div class="t" style="left:1458.206px;top:318.169px;font-size:11.438px;color:#f45b4f;letter-spacing:0.547px;">Foto</div>
<div class="a" style="left:1492.312px;top:312.825px;width:51.562px;height:18.375px;background:transparent;border:1.312px solid #f24a3d;border-radius:3px"></div>
<div class="t" style="left:1497.9px;top:318.169px;font-size:11.438px;color:#f45b4f;letter-spacing:0.079px;">Gamma</div>
<div class="a" style="left:684.375px;top:347.006px;width:1235.625px;height:48.75px;background:#fff;"></div>
<div class="a" style="left:684.375px;top:395.756px;width:1235.625px;height:1.256px;background:#efeded;"></div>
<div class="cb" style="left:701.156px;top:363.506px"></div>
<svg style="left:739.219px;top:356.156px" width="24.19" height="29.25" viewBox="0 0 129 156" ><path d="M12 0h66l51 53v91a12 12 0 0 1-12 12H12a12 12 0 0 1-12-12V12a12 12 0 0 1 12-12z" fill="#d9d7d6"/><path d="M78 0l51 53H86a8 8 0 0 1-8-8z" fill="#a5a3a1"/><circle cx="37" cy="75" r="15" fill="#aeacaa"/><path d="M18 137l22-32 16 18 22-29 32 43z" fill="#b0aeac"/></svg>
<div class="t" style="left:773.812px;top:364.556px;letter-spacing:-0.043px;">image.jpg</div>
<div class="t" style="left:875.231px;top:364.556px;letter-spacing:0.231px;">29/06/2015</div>
<div class="t" style="left:970.875px;top:364.556px;letter-spacing:-0.184px;">12:41:43</div>
<div class="t" style="left:1061.812px;top:364.556px;letter-spacing:-0.566px;">Imagen JPG</div>
<div class="t" style="left:1202.812px;top:364.556px;letter-spacing:-0.118px;">Lorem ipsum</div>
<div class="t" style="left:1328.831px;top:364.556px;letter-spacing:-0.118px;">Lorem ipsum</div>
<div class="a" style="left:684.375px;top:397.013px;width:1235.625px;height:48.75px;background:#f1efef;"></div>
<div class="a" style="left:684.375px;top:445.763px;width:1235.625px;height:1.256px;background:#f6eeee;"></div>
<div class="a" style="left:701.25px;top:413.756px;width:16.875px;height:16.875px;background:#f2554a;border-radius:3.75px"></div>
<svg style="left:703.688px;top:416.569px" width="12.19" height="10.50" viewBox="0 0 6.500 5.600" fill="none" stroke="#fff" stroke-width="1.250" stroke-linecap="round" stroke-linejoin="round"><path d="M.9 2.900l1.700 1.800L5.600.9"/></svg>
<svg style="left:739.219px;top:406.163px" width="24.19" height="29.25" viewBox="0 0 129 156" ><path d="M12 0h66l51 53v91a12 12 0 0 1-12 12H12a12 12 0 0 1-12-12V12a12 12 0 0 1 12-12z" fill="#d9d7d6"/><path d="M78 0l51 53H86a8 8 0 0 1-8-8z" fill="#a5a3a1"/><circle cx="37" cy="75" r="15" fill="#aeacaa"/><path d="M18 137l22-32 16 18 22-29 32 43z" fill="#b0aeac"/></svg>
<div class="t" style="left:773.812px;top:413.306px;color:#f45b4f;letter-spacing:-0.043px;">image.jpg</div>
<div class="t" style="left:875.231px;top:413.306px;color:#f45b4f;letter-spacing:0.231px;">29/06/2015</div>
<div class="t" style="left:970.875px;top:413.306px;color:#f45b4f;letter-spacing:-0.184px;">12:41:43</div>
<div class="t" style="left:1061.812px;top:413.306px;color:#f45b4f;letter-spacing:-0.566px;">Imagen JPG</div>
<div class="t" style="left:1202.812px;top:413.306px;color:#f45b4f;letter-spacing:-0.118px;">Lorem ipsum</div>
<div class="t" style="left:1328.831px;top:413.306px;color:#f45b4f;letter-spacing:-0.118px;">Lorem ipsum</div>
<svg style="left:1033.125px;top:333.75px" width="31.88" height="35.62" viewBox="0 0 17 19" ><path d="M5.200 1.500a1.400 1.400 0 0 1 2.800 0v6l.3-1.200a1.300 1.300 0 0 1 2.500.3v1l.2-.6a1.250 1.250 0 0 1 2.400.5v.9l.2-.3a1.150 1.150 0 0 1 2.100.7v4.200c0 2.800-1.600 5-4.600 5h-2.200c-2 0-3.300-1-4.300-2.700L1.300 10.400a1.300 1.300 0 0 1 2.200-1.400l1.700 2.200z" fill="#fff" stroke="#1a1a1a" stroke-width="1.350" stroke-linejoin="round"/><path d="M8.100 8.200v3M10.700 8.600v2.600M13.100 9.200v2.200" stroke="#222" stroke-width=".9" stroke-linecap="round"/></svg>
<svg style="left:281.438px;top:1049.062px" width="20.06" height="19.31" viewBox="0 0 10.7 10.3" fill="none" stroke-linecap="round"><rect x=".6" y=".6" width="9.500" height="9.100" rx="1.400" stroke="#8f8d8b" stroke-width="1.200"/><path d="M5.350 2.800v4.700M3 5.150h4.700" stroke="#5d5b59" stroke-width="1"/></svg>
<svg style="left:316.875px;top:1047.75px" width="22.95" height="22.95" viewBox="0 0 12 12" fill="none" stroke="#cfcdcc" stroke-width="1.0" stroke-linecap="round" stroke-linejoin="round"><path d="M.8 2.600h9.400M3.600 2.600V1.200h3.800v1.400M1.800 2.600l.5 7.600a1 1 0 0 0 1 .9h4.400a1 1 0 0 0 1-.9l.5-7.600M4.400 4.900v3.900M6.600 4.900v3.900"/></svg>
<svg style="left:350.062px;top:1047.938px" width="22.50" height="22.50" viewBox="0 0 12 12" fill="none" stroke="#cfcdcc" stroke-width="1.0" stroke-linecap="round" stroke-linejoin="round"><circle cx="5.800" cy="5.800" r="1.700"/><path d="M5 .6h1.600l.4 1.500 1 .5 1.400-.8 1.100 1.100-.8 1.400.5 1 1.500.4v1.600l-1.500.4-.5 1 .8 1.400-1.100 1.100-1.400-.8-1 .5-.4 1.500H5l-.4-1.500-1-.5-1.400.8-1.100-1.100.8-1.400-.5-1L-.1 6.600V5l1.500-.4.5-1-.8-1.400 1.100-1.100 1.400.8 1-.5z"/></svg>
<svg style="left:385.688px;top:1047.75px" width="24.38" height="22.50" viewBox="0 0 13 12" fill="none" stroke="#8b8987" stroke-width="1.1" stroke-linecap="round" stroke-linejoin="round"><g transform="translate(13,0) scale(-1,1)"><path d="M11.800 1.300v3.200H8.600M1.200 10.700V7.500h3.200M2.500 4.300a4.600 4.600 0 0 1 7.700-1.600l1.600 1.800M1.200 7.500l1.600 1.800a4.600 4.600 0 0 0 7.700-1.600"/></g></svg>
<svg style="left:691.875px;top:1047.75px" width="22.50" height="22.50" viewBox="0 0 12 12" fill="none" stroke="#cfcdcc" stroke-width="1.0" stroke-linecap="round" stroke-linejoin="round"><path d="M1 6.800v3a1 1 0 0 0 1 1h7.600a1 1 0 0 0 1-1v-3M3.300 3.600L5.800 1l2.500 2.600M5.800 1v7"/></svg>
<svg style="left:727.312px;top:1047.75px" width="22.95" height="22.95" viewBox="0 0 12 12" fill="none" stroke="#8b8987" stroke-width="1.1" stroke-linecap="round" stroke-linejoin="round"><path d="M.8 2.600h9.400M3.600 2.600V1.200h3.800v1.400M1.800 2.600l.5 7.600a1 1 0 0 0 1 .9h4.400a1 1 0 0 0 1-.9l.5-7.600M4.400 4.900v3.900M6.600 4.900v3.900"/></svg>
<svg style="left:762.188px;top:1047.75px" width="22.50" height="22.50" viewBox="0 0 12 12" fill="none" stroke="#8b8987" stroke-width="1.1" stroke-linecap="round" stroke-linejoin="round"><path d="M1 6.800v3a1 1 0 0 0 1 1h7.600a1 1 0 0 0 1-1v-3M3.300 5.400L5.800 8l2.500-2.600M5.800 8V1"/></svg>
<svg style="left:798.375px;top:1047.75px" width="22.50" height="22.50" viewBox="0 0 12 12" fill="none" stroke="#cfcdcc" stroke-width="1.0" stroke-linecap="round" stroke-linejoin="round"><path d="M1.300 8.300L8 1.600l1.700 1.700L3 10l-2.200.5zM6.500 10.600h4"/></svg>
<svg style="left:831.938px;top:1047.75px" width="24.38" height="22.50" viewBox="0 0 13 12" fill="none" stroke="#8b8987" stroke-width="1.1" stroke-linecap="round" stroke-linejoin="round"><g transform="translate(13,0) scale(-1,1)"><path d="M11.800 1.300v3.200H8.600M1.200 10.700V7.500h3.200M2.500 4.300a4.600 4.600 0 0 1 7.700-1.600l1.600 1.800M1.200 7.500l1.600 1.800a4.600 4.600 0 0 0 7.700-1.600"/></g></svg>
<div class="t" style="left:1767.75px;top:1055.344px;font-size:12.188px;color:#555351;letter-spacing:-0.032px;">1 elemento seleccionado</div>
</div></div></div></body></html>
